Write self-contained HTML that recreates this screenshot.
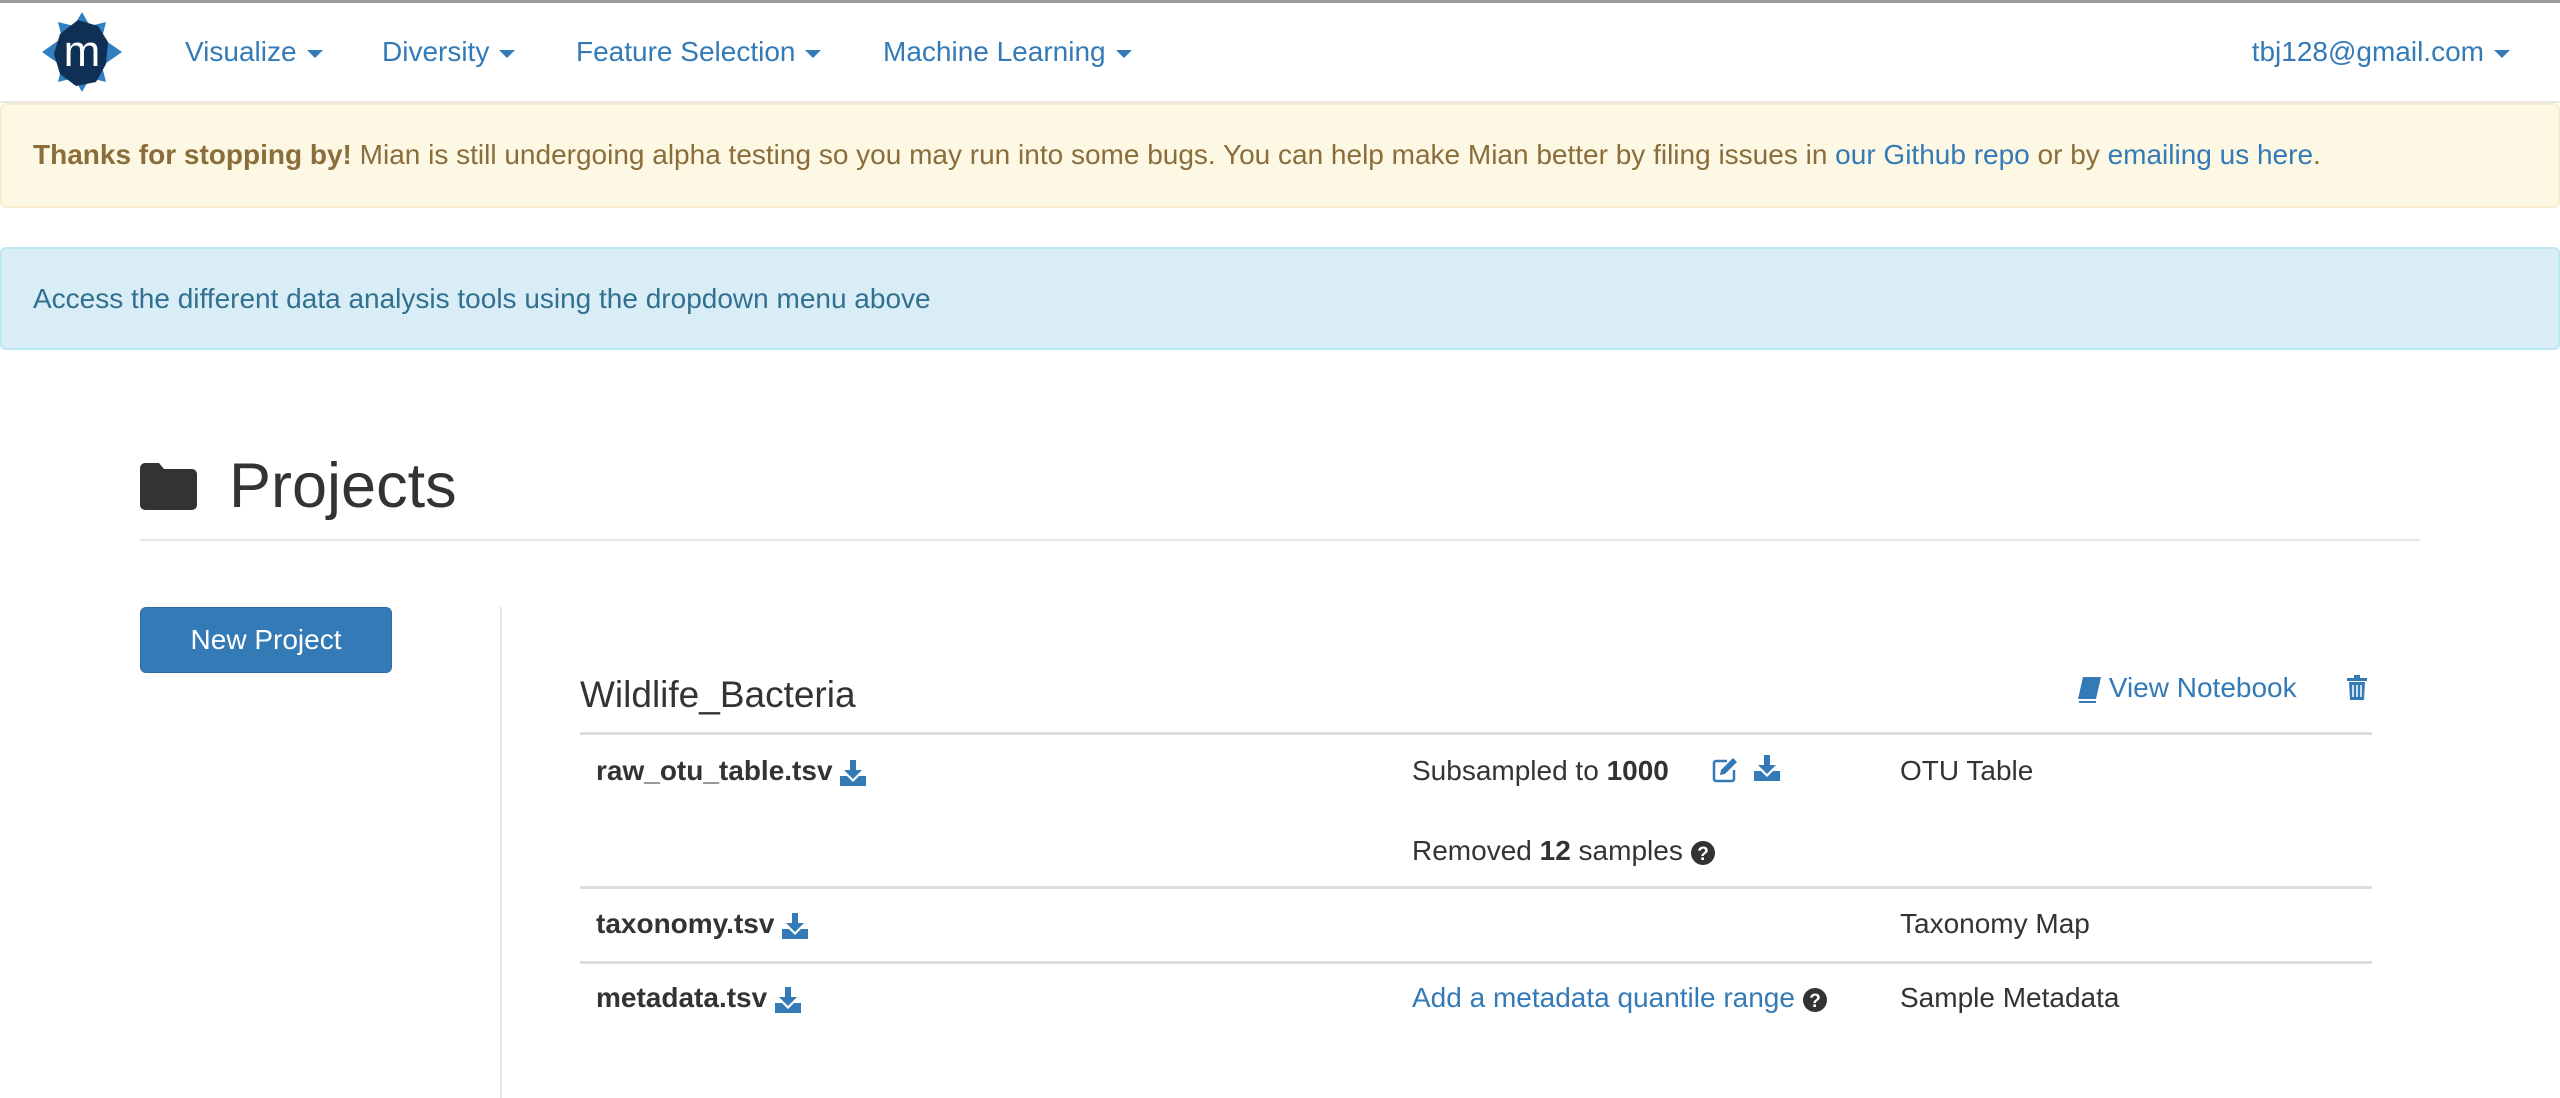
<!DOCTYPE html>
<html><head><meta charset="utf-8"><style>
body{margin:0;width:2560px;height:1098px;position:relative;overflow:hidden;background:#fff;font-family:"Liberation Sans",Arial,sans-serif;color:#333;font-size:28px}
.a{position:absolute;white-space:nowrap;line-height:40px}
.l{color:#337ab7}
.car{display:inline-block;width:0;height:0;border-left:8px solid transparent;border-right:8px solid transparent;border-top:8px solid #337ab7;vertical-align:middle;margin-left:10px}
.hr{position:absolute;height:3px;background:#ddd}
svg{vertical-align:middle}
</style></head><body>
<div style="position:absolute;left:0;top:0;width:2560px;height:3px;background:#9a9a9a"></div>
<div style="position:absolute;left:0;top:101px;width:2560px;height:2px;background:#e7e7e7"></div>
<svg style="position:absolute;left:40px;top:12px" width="84" height="80" viewBox="0 0 84 80">
<polygon points="42,0 50,14 66,10 62,26 82,40 62,54 66,70 50,66 42,80 34,66 18,70 22,54 2,40 22,26 18,10 34,14" fill="#2f7fc1"/>
<polygon points="38,8 58,14 68,30 66,52 56,70 36,74 20,62 14,42 20,22" fill="#0f2f55"/>
<text x="42" y="54" text-anchor="middle" font-family="Liberation Sans" font-size="44" fill="#fff">m</text>
</svg>
<div class="a l" style="left:185px;top:32px">Visualize<span class="car"></span></div>
<div class="a l" style="left:382px;top:32px">Diversity<span class="car"></span></div>
<div class="a l" style="left:576px;top:32px">Feature Selection<span class="car"></span></div>
<div class="a l" style="left:883px;top:32px">Machine Learning<span class="car"></span></div>
<div class="a l" style="right:50px;top:32px">tbj128@gmail.com<span class="car"></span></div>

<div style="position:absolute;left:0;top:103px;width:2556px;height:101px;background:#fcf8e3;border:2px solid #faebcc;border-radius:6px"></div>
<div class="a" style="left:33px;top:135px;color:#8a6d3b"><b>Thanks for stopping by!</b> Mian is still undergoing alpha testing so you may run into some bugs. You can help make Mian better by filing issues in <span class="l">our Github repo</span> or by <span class="l">emailing us here</span>.</div>

<div style="position:absolute;left:0;top:247px;width:2556px;height:99px;background:#d9edf7;border:2px solid #bce8f1;border-radius:6px"></div>
<div class="a" style="left:33px;top:279px;color:#31708f">Access the different data analysis tools using the dropdown menu above</div>

<svg style="position:absolute;left:140px;top:462px" width="57" height="48" viewBox="0 0 57 48"><path d="M0 6a5 5 0 0 1 5-5h14l5 6h28a5 5 0 0 1 5 5v31a5 5 0 0 1-5 5H5a5 5 0 0 1-5-5z" fill="#333"/></svg>
<div class="a" style="left:229px;top:451px;font-size:63px;line-height:70px">Projects</div>
<div class="hr" style="left:140px;top:539px;width:2280px;height:2px;background:#e5e5e5"></div>

<div style="position:absolute;left:140px;top:607px;width:250px;height:64px;background:#337ab7;border:1px solid #2e6da4;border-radius:6px;color:#fff;text-align:center;line-height:64px">New Project</div>
<div style="position:absolute;left:500px;top:607px;width:2px;height:491px;background:#e5e5e5"></div>

<div class="a" style="left:580px;top:673px;font-size:37px;line-height:44px">Wildlife_Bacteria</div>
<div class="a l" style="left:2077px;top:668px"><svg width="24" height="26" viewBox="0 0 24 26"><path d="M6 0h18l-5 22H1zM2 24h17v2H2z" fill="#337ab7"/></svg> View Notebook</div>
<svg style="position:absolute;left:2347px;top:675px" width="20" height="25" viewBox="0 0 20 25"><path d="M0 3h20v3H0zM7 0h6v3H7zM2 7h16l-1 18H3z" fill="#337ab7"/><path d="M6 10v12M10 10v12M14 10v12" stroke="#fff" stroke-width="1.5"/></svg>

<div class="hr" style="left:580px;top:732px;width:1792px"></div>
<div class="hr" style="left:580px;top:886px;width:1792px"></div>
<div class="hr" style="left:580px;top:961px;width:1792px"></div>

<div class="a" style="left:596px;top:751px"><b>raw_otu_table.tsv</b> <svg width="26" height="26" viewBox="0 0 26 26"><path d="M10 0h6v10h6l-9 9-9-9h6z" fill="#337ab7"/><path d="M0 16h7l6 6 6-6h7v10H0z" fill="#337ab7"/></svg></div>
<div class="a" style="left:1412px;top:751px">Subsampled to <b>1000</b></div>
<svg style="position:absolute;left:1712px;top:757px" width="26" height="26" viewBox="0 0 26 26"><path d="M15 4H4a2 2 0 0 0-2 2v16a2 2 0 0 0 2 2h16a2 2 0 0 0 2-2v-9" fill="none" stroke="#337ab7" stroke-width="2.5"/><path d="M21 1l4 4-12 12-5 1 1-5z" fill="#337ab7"/></svg>
<svg style="position:absolute;left:1754px;top:755px" width="26" height="26" viewBox="0 0 26 26"><path d="M10 0h6v10h6l-9 9-9-9h6z" fill="#337ab7"/><path d="M0 16h7l6 6 6-6h7v10H0z" fill="#337ab7"/></svg>
<div class="a" style="left:1900px;top:751px">OTU Table</div>
<div class="a" style="left:1412px;top:831px">Removed <b>12</b> samples <svg width="24" height="24" viewBox="0 0 24 24"><circle cx="12" cy="12" r="12" fill="#333"/><text x="12" y="19" text-anchor="middle" font-family="Liberation Sans" font-weight="bold" font-size="19" fill="#fff">?</text></svg></div>

<div class="a" style="left:596px;top:904px"><b>taxonomy.tsv</b> <svg width="26" height="26" viewBox="0 0 26 26"><path d="M10 0h6v10h6l-9 9-9-9h6z" fill="#337ab7"/><path d="M0 16h7l6 6 6-6h7v10H0z" fill="#337ab7"/></svg></div>
<div class="a" style="left:1900px;top:904px">Taxonomy Map</div>

<div class="a" style="left:596px;top:978px"><b>metadata.tsv</b> <svg width="26" height="26" viewBox="0 0 26 26"><path d="M10 0h6v10h6l-9 9-9-9h6z" fill="#337ab7"/><path d="M0 16h7l6 6 6-6h7v10H0z" fill="#337ab7"/></svg></div>
<div class="a" style="left:1412px;top:978px"><span class="l">Add a metadata quantile range</span> <svg width="24" height="24" viewBox="0 0 24 24"><circle cx="12" cy="12" r="12" fill="#333"/><text x="12" y="19" text-anchor="middle" font-family="Liberation Sans" font-weight="bold" font-size="19" fill="#fff">?</text></svg></div>
<div class="a" style="left:1900px;top:978px">Sample Metadata</div>
</body></html>
